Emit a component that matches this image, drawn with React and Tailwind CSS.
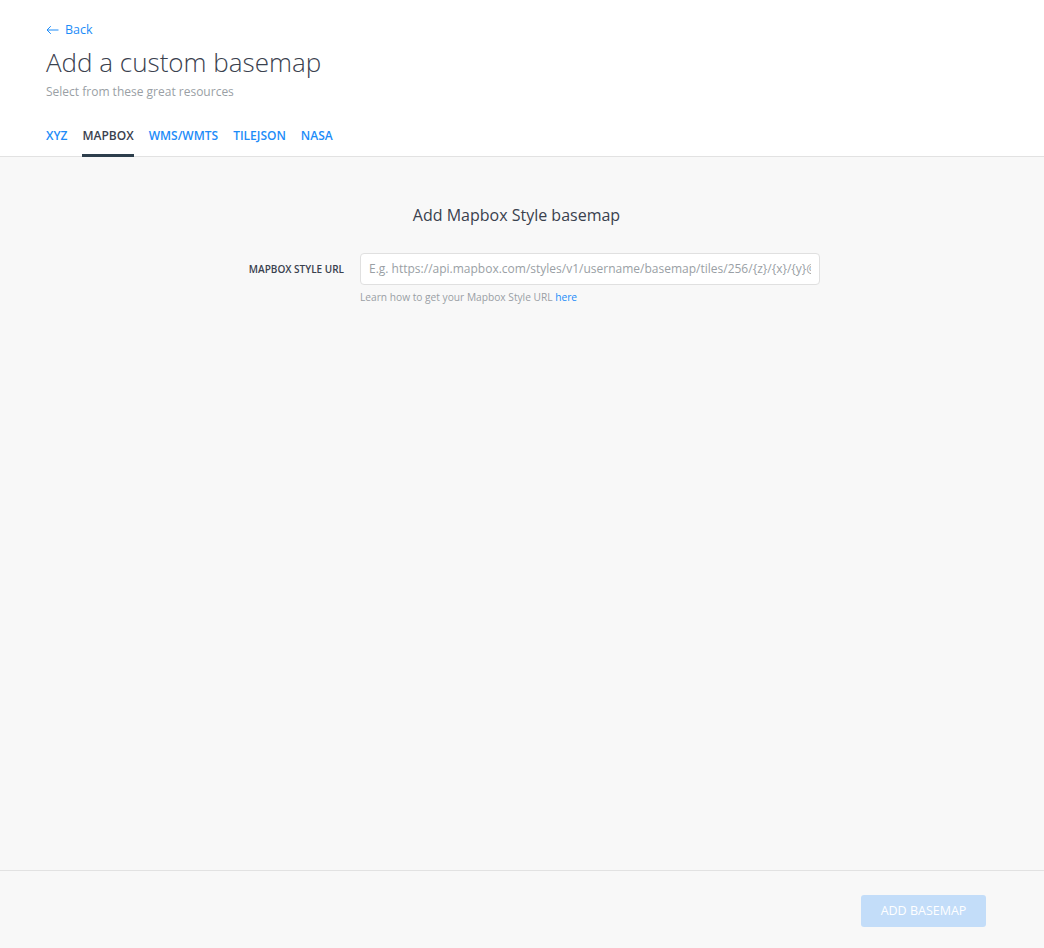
export default function App() {
  const tabs = ["XYZ", "MAPBOX", "WMS/WMTS", "TILEJSON", "NASA"];
  return (
    <div className="w-[1044px] h-[948px] flex flex-col bg-[#f8f8f8]" style={{ fontFamily: '"Open Sans", sans-serif' }}>
      <div className="bg-white border-b border-[#e2e2e2] px-[46px] pt-[20px]">
        <div className="flex items-center gap-[6px] text-[12.5px] text-[#1d8cf8] h-[20px]">
          <svg width="13" height="10" viewBox="0 0 13 10" fill="none" stroke="#1d8cf8" strokeWidth="1">
            <path d="M12.5 5H1.2M4.8 1.2L1 5 4.8 8.8" />
          </svg>
          <span>Back</span>
        </div>
        <h1 className="text-[26px] font-light text-[#3a414e] leading-[36px] mt-[4px]">Add a custom basemap</h1>
        <p className="text-[12px] text-[#9a9fa5] leading-[16px] mt-[4px]">Select from these great resources</p>
        <div className="flex gap-[15px] mt-[28px]">
          {tabs.map((t) => (
            <div
              key={t}
              className={
                t === "MAPBOX"
                  ? "text-[12px] font-semibold text-[#3a414e] pb-[10px] border-b-[3px] border-[#2d3e4c] -mb-px leading-[16px]"
                  : "text-[12px] font-semibold text-[#1d8cf8] pb-[10px] border-b-[3px] border-transparent -mb-px leading-[16px]"
              }
            >
              {t}
            </div>
          ))}
        </div>
      </div>
      <div className="flex-1 flex flex-col items-center pt-[47px]">
        <h2 className="text-[16px] text-[#3a414e] leading-[22px] mr-[11px]">Add Mapbox Style basemap</h2>
        <div className="flex mt-[27px]">
          <div className="w-[136px] pr-[16px] text-right text-[10px] font-semibold text-[#3a414e] h-[32px] flex items-center justify-end">MAPBOX STYLE URL</div>
          <div className="flex flex-col">
            <div className="w-[460px] h-[32px] bg-white border border-[#e0e0e0] rounded-[4px] flex items-center pl-[8px] overflow-hidden whitespace-nowrap text-[12px] text-[#9a9fa5]">
              <span className="block w-[442px] overflow-hidden">E.g. https://api.mapbox.com/styles/v1/username/basemap/tiles/256/{"{z}"}/{"{x}"}/{"{y}"}@2x</span>
            </div>
            <div className="text-[10.2px] text-[#9a9fa5] mt-[5px] leading-[14px]">
              Learn how to get your Mapbox Style URL <span className="text-[#1d8cf8]">here</span>
            </div>
          </div>
        </div>
      </div>
      <div className="h-[78px] border-t border-[#e2e2e2] flex items-start justify-end pr-[58px] pt-[24px]">
        <div className="w-[125px] h-[32px] rounded-[3px] bg-[#c3ddf9] text-white text-[12.5px] flex items-center justify-center">ADD BASEMAP</div>
      </div>
    </div>
  );
}
